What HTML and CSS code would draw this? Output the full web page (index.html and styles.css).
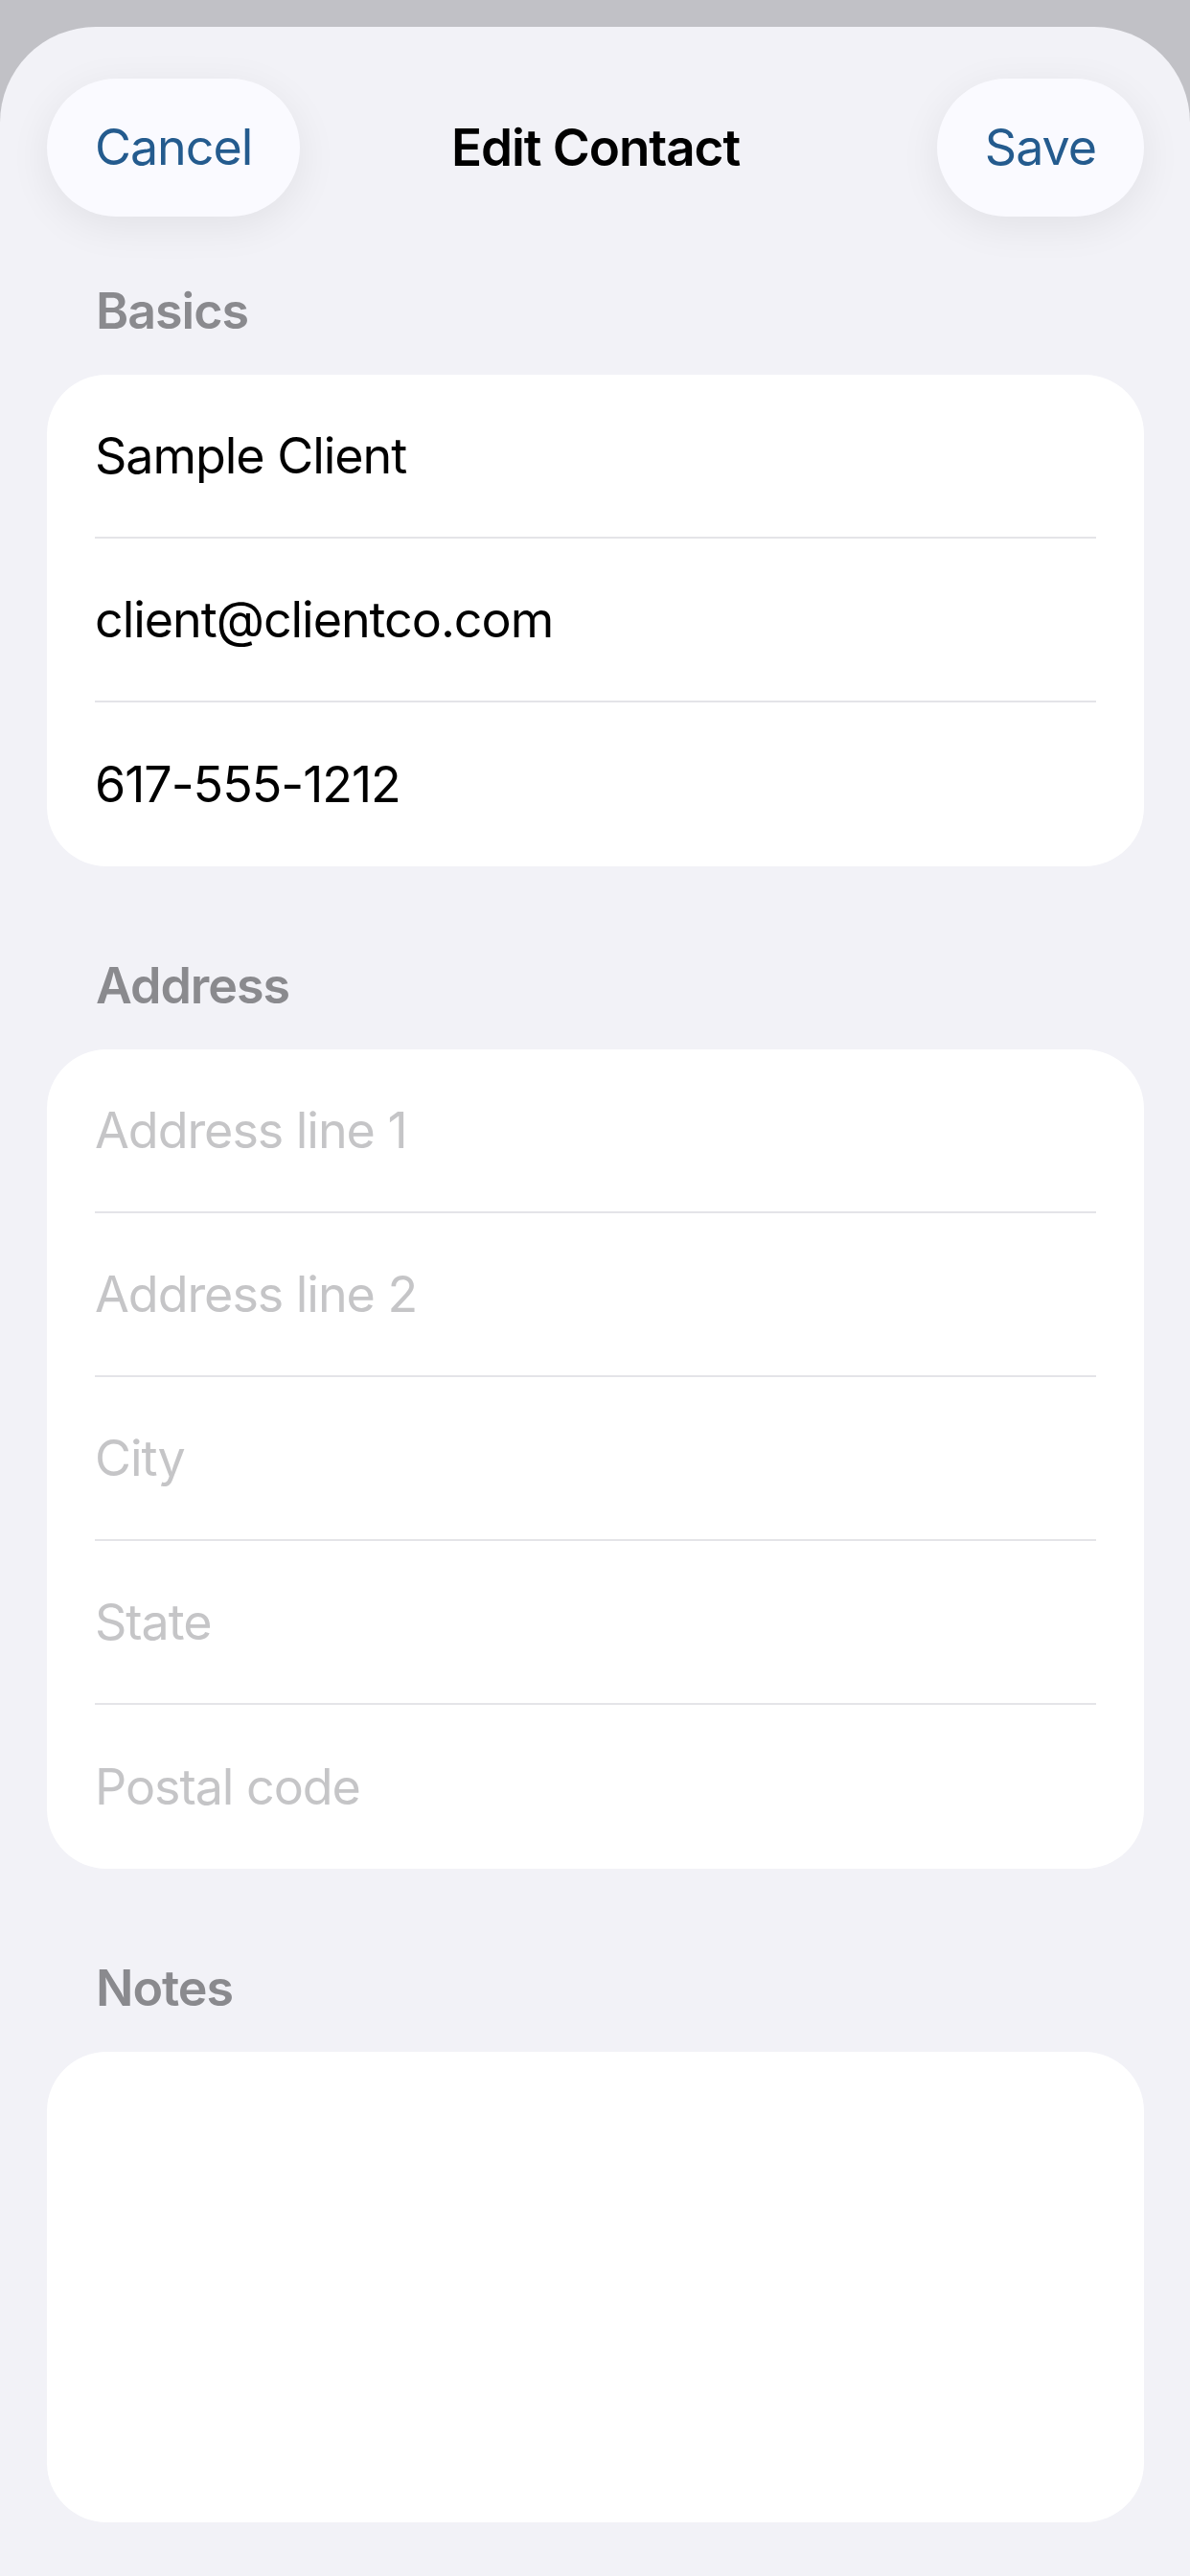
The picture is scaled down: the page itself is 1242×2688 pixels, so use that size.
FILE: index.html
```html
<!DOCTYPE html>
<html lang="en">
<head>
  <meta charset="UTF-8">
  <title>Edit Contact</title>
  <link rel="stylesheet" href="styles.css">
</head>
<body>
<div class="sheet">
  <!-- ナビゲーション -->
  <div class="nav">
    <button class="pill cancel">Cancel</button>
    <h1 class="title">Edit Contact</h1>
    <button class="pill save">Save</button>
  </div>

  <!-- Basics -->
  <h2 class="section-label">Basics</h2>
  <div class="card">
    <div class="row"><input class="field" type="text" value="Sample Client"></div>
    <div class="row"><input class="field" type="email" value="client@clientco.com"></div>
    <div class="row"><input class="field" type="tel" value="617-555-1212"></div>
  </div>

  <!-- Address -->
  <h2 class="section-label">Address</h2>
  <div class="card">
    <div class="row"><input class="field" type="text" placeholder="Address line 1"></div>
    <div class="row"><input class="field" type="text" placeholder="Address line 2"></div>
    <div class="row"><input class="field" type="text" placeholder="City"></div>
    <div class="row"><input class="field" type="text" placeholder="State"></div>
    <div class="row"><input class="field" type="text" placeholder="Postal code"></div>
  </div>

  <!-- Notes -->
  <h2 class="section-label">Notes</h2>
  <div class="card notes">
    <textarea class="notes-input"></textarea>
  </div>
</div>
</body>
</html>
```

FILE: styles.css
```css
body {
  margin: 0;
  background-color: #c1c1c6;
  font-family: "Inter", "Noto Sans", sans-serif;
}

/* シート全体 */
.sheet {
  margin-top: 28px;
  min-height: 2660px;
  box-sizing: border-box;
  padding: 53px 48px 0 49px;
  background-color: #f2f2f7;
  border-radius: 100px 100px 0 0;
}

/* ナビゲーション */
.nav {
  display: grid;
  grid-template-columns: 1fr auto 1fr;
  align-items: center;
  height: 145px;
}
.pill {
  height: 144px;
  padding: 0 50px;
  border: none;
  border-radius: 72px;
  background-color: #fafaff;
  box-shadow: 0 10px 44px rgba(0, 0, 0, 0.07);
  color: #245b8e;
  font-family: inherit;
  font-size: 52px;
  letter-spacing: -0.02em;
}
.cancel {
  justify-self: start;
}
.save {
  justify-self: end;
}
.title {
  margin: 0;
  font-size: 53px;
  font-weight: 600;
  letter-spacing: -0.02em;
  color: #000;
}

/* セクション見出し */
.section-label {
  margin: 95px 0 36px 51px;
  height: 60px;
  line-height: 60px;
  font-size: 52px;
  font-weight: 600;
  letter-spacing: -0.02em;
  color: #8a8a8e;
}
.nav + .section-label {
  margin-top: 69px;
}

/* カード */
.card {
  background-color: #fff;
  border-radius: 62px;
}
.row {
  display: flex;
  align-items: center;
  height: 171px;
  box-sizing: border-box;
  margin: 0 50px;
  border-bottom: 2px solid #e4e4e8;
}
.row:last-child {
  border-bottom: none;
}
.field {
  width: 100%;
  padding: 0;
  border: none;
  outline: none;
  background: transparent;
  font-family: inherit;
  font-size: 52px;
  letter-spacing: -0.02em;
  color: #000;
}
.field::placeholder {
  color: #c5c5c7;
}

/* メモ */
.notes {
  height: 491px;
}
.notes-input {
  display: block;
  width: 100%;
  height: 100%;
  box-sizing: border-box;
  padding: 40px 50px;
  border: none;
  outline: none;
  resize: none;
  background: transparent;
  font-family: inherit;
  font-size: 52px;
}
```
